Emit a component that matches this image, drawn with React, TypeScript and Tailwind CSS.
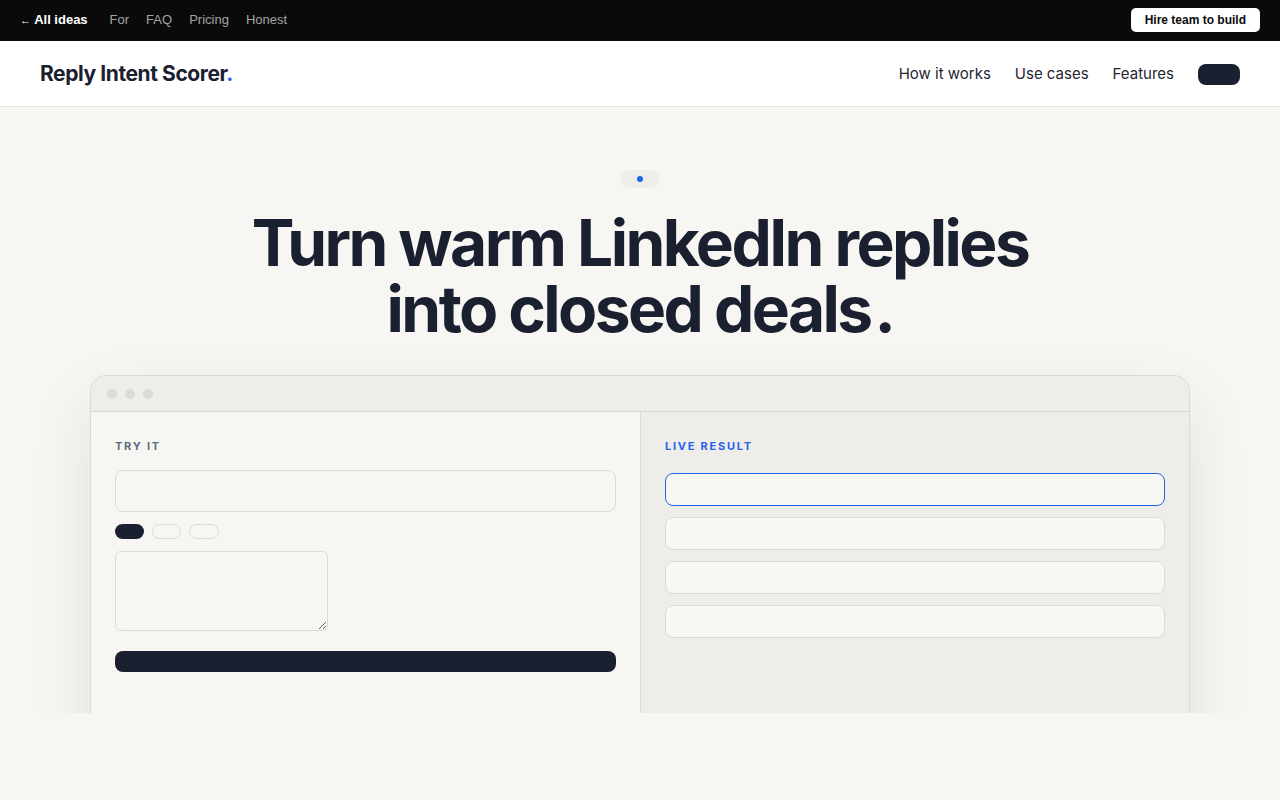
import React from "react";

const sans = "font-['Inter','Noto_Sans',sans-serif]";

function TopBar() {
  return (
    <div className="flex h-[41px] items-center justify-between bg-[#0a0a0a] px-5 pb-px font-['Liberation_Sans',Arial,sans-serif] text-[13px]">
      <div className="flex items-center gap-[22px]">
        <a className="font-bold text-white">
          <span className="text-[11px]">←</span> All ideas
        </a>
        <div className="flex items-center gap-[17px] text-[#a3a3a3]">
          <a>For</a>
          <a>FAQ</a>
          <a>Pricing</a>
          <a>Honest</a>
        </div>
      </div>
      <button className="h-6 rounded-[5px] bg-white px-[14px] text-[12px] font-bold text-[#0a0a0a]">
        Hire team to build
      </button>
    </div>
  );
}

function Header() {
  return (
    <header className={`flex h-[66px] items-center justify-between border-b border-[#e7e5e0] bg-white px-10 pt-px ${sans}`}>
      <div className="text-[21px] font-bold tracking-[-0.02em] text-[#1a2030]">
        Reply Intent Scorer<span className="text-[#2563eb]">.</span>
      </div>
      <nav className="flex items-center gap-6 text-[15px] text-[#1f2533]">
        <a>How it works</a>
        <a>Use cases</a>
        <a>Features</a>
        <button className="h-[21px] w-[42px] rounded-lg bg-[#1a2030]" />
      </nav>
    </header>
  );
}

function TryPane() {
  return (
    <div className="flex flex-col bg-[#f7f6f2] px-6 pt-[26px]">
      <div className="text-[11px] font-bold tracking-[0.16em] text-[#5b6b80]">TRY IT</div>
      <div className="mt-[15px] h-[42px] rounded-lg border border-[#dcdad5] bg-[#f7f6f2]" />
      <div className="mt-3 flex gap-2">
        <span className="h-[15px] w-[29px] rounded-full bg-[#1a2030]" />
        <span className="h-[15px] w-[29px] rounded-full border border-[#dcdad5]" />
        <span className="h-[15px] w-[30px] rounded-full border border-[#dcdad5]" />
      </div>
      <textarea
        readOnly
        className="mt-3 h-20 w-[213px] rounded-md border border-[#dcdad5] bg-[#f7f6f2] outline-none"
      />
      <button className="mt-5 h-[21px] w-full rounded-lg bg-[#1a2030]" />
    </div>
  );
}

function ResultPane() {
  return (
    <div className="flex flex-col border-l border-[#dcdad5] bg-[#eeede9] px-6 pt-[26px]">
      <div className="text-[11px] font-bold tracking-[0.16em] text-[#2563eb]">LIVE RESULT</div>
      <div className="mt-[18px] flex flex-col gap-[11px]">
        <div className="h-[33px] rounded-lg border border-[#2563eb] bg-[#f8f7f4]" />
        <div className="h-[33px] rounded-lg border border-[#dcdad5] bg-[#f8f7f4]" />
        <div className="h-[33px] rounded-lg border border-[#dcdad5] bg-[#f8f7f4]" />
        <div className="h-[33px] rounded-lg border border-[#dcdad5] bg-[#f8f7f4]" />
      </div>
    </div>
  );
}

function DemoWindow() {
  return (
    <div className="mx-auto mt-[33px] w-[1100px] overflow-hidden rounded-t-2xl border border-[#dcdad5] bg-[#f7f6f2] shadow-[0_24px_60px_rgba(40,35,20,0.10)]">
      <div className="flex h-9 items-center gap-2 border-b border-[#dcdad5] bg-[#eeede9] px-4">
        <span className="h-[10px] w-[10px] rounded-full bg-[#dcdbd8]" />
        <span className="h-[10px] w-[10px] rounded-full bg-[#dcdbd8]" />
        <span className="h-[10px] w-[10px] rounded-full bg-[#dcdbd8]" />
      </div>
      <div className="grid h-[400px] grid-cols-2">
        <TryPane />
        <ResultPane />
      </div>
    </div>
  );
}

export default function App() {
  return (
    <div className={`min-h-screen bg-[#f7f6f2] ${sans}`}>
      <TopBar />
      <Header />
      <section className="h-[606px] overflow-hidden pt-[63px]">
        <div className="flex justify-center">
          <span className="flex h-[18px] w-[38px] items-center justify-center rounded-full bg-[#eeede9]">
            <span className="h-[6px] w-[6px] rounded-full bg-[#2563eb]" />
          </span>
        </div>
        <h1 className="mt-[22px] text-center text-[64px] font-bold leading-[66px] tracking-[-0.04em] text-[#1a2030]">
          Turn warm LinkedIn replies
          <br />
          into closed deals<span className="ml-1">.</span>
        </h1>
        <DemoWindow />
      </section>
    </div>
  );
}
